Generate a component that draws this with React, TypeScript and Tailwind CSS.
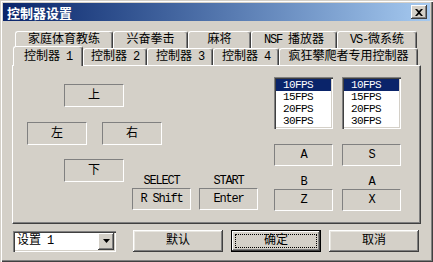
import React from 'react';

const sunken = 'border border-t-[#808080] border-l-[#808080] border-b-white border-r-white flex items-center justify-center';
const latin = "text-[12px] tracking-[-1.2px] font-['Liberation_Mono',monospace]";
const listText = "text-[11px] tracking-[-0.6px] font-['Liberation_Mono',monospace]";

function Tab({ label, w, selected }: { label: React.ReactNode; w: number; selected?: boolean }) {
  return (
    <div
      style={{ width: w }}
      className={`flex items-center justify-center bg-[#d4d0c8] border-t border-l border-r border-t-white border-l-white border-r-[#404040] shadow-[inset_-1px_0_#808080] rounded-t-[3px] ${
        selected ? 'relative z-10 h-[20px] -mt-[2px] -mb-[1px]' : 'h-[17px]'
      }`}
    >
      <span className="whitespace-pre leading-none">{label}</span>
    </div>
  );
}

function KeyBox({ children, w = 59, h = 22 }: { children: React.ReactNode; w?: number; h?: number }) {
  return (
    <div style={{ width: w, height: h }} className={sunken}>
      {children}
    </div>
  );
}

function FpsList() {
  const items = ['10FPS', '15FPS', '20FPS', '30FPS'];
  return (
    <div className="w-[59px] h-[52px] bg-white p-[2px] shadow-[inset_1px_1px_#808080,inset_2px_2px_#404040,inset_-1px_-1px_#fff,inset_-2px_-2px_#d4d0c8]">
      {items.map((it, i) => (
        <div
          key={it}
          className={`h-[12px] flex items-center pl-[7px] ${i === 0 ? 'bg-[#0a246a] text-white' : 'text-black'}`}
        >
          <span className={`${listText} leading-[11px]`}>{it}</span>
        </div>
      ))}
    </div>
  );
}

function Button({ label, isDefault }: { label: string; isDefault?: boolean }) {
  if (isDefault) {
    return (
      <div className="w-[90px] h-[22px] border border-black">
        <div className="w-full h-full bg-[#d4d0c8] p-[3px] shadow-[inset_-1px_-1px_#404040,inset_1px_1px_#fff,inset_-2px_-2px_#808080]">
          <div className="w-full h-full border border-dotted border-black flex items-center justify-center">
            {label}
          </div>
        </div>
      </div>
    );
  }
  return (
    <div className="w-[90px] h-[22px] flex items-center justify-center bg-[#d4d0c8] shadow-[inset_-1px_-1px_#404040,inset_1px_1px_#fff,inset_-2px_-2px_#808080,inset_2px_2px_#e8e6e0]">
      {label}
    </div>
  );
}

export default function App() {
  return (
    <div className="w-[433px] h-[262px] bg-[#d4d0c8] p-[3px] text-[12px] text-black font-['Liberation_Mono','Noto_Sans_CJK_SC',monospace] shadow-[inset_1px_1px_#d4d0c8,inset_2px_2px_#fff,inset_-1px_-1px_#404040,inset_-2px_-2px_#808080]">
      {/* title bar */}
      <div className="h-[18px] flex items-center justify-between bg-linear-to-r from-[#0a246a] to-[#a6caf0] pl-[4px] pr-[3px]">
        <span className="text-white font-bold text-[13px] leading-none font-['Noto_Sans_CJK_SC',sans-serif]">控制器设置</span>
        <div className="w-[16px] h-[14px] bg-[#d4d0c8] flex items-center justify-center shadow-[inset_-1px_-1px_#404040,inset_1px_1px_#fff,inset_-2px_-2px_#808080]">
          <svg width="8" height="7" viewBox="0 0 8 7">
            <path d="M0 0h2l2 2 2-2h2L5 3.5 8 7H6L4 5 2 7H0l3-3.5z" fill="#000" />
          </svg>
        </div>
      </div>

      {/* tabs */}
      <div className="mt-[10px] flex pl-[12px]">
        <Tab label="家庭体育教练" w={98} />
        <Tab label="兴奋拳击" w={75} />
        <Tab label="麻将" w={63} />
        <Tab label={<><span className={latin}>NSF </span>播放器</>} w={86} />
        <Tab label={<><span className={latin}>VS-</span>微系统</>} w={80} />
      </div>
      <div className="flex pl-[10px] items-end">
        <Tab label={<>控制器<span className={latin}> 1</span></>} w={70} selected />
        <Tab label={<>控制器<span className={latin}> 2</span></>} w={64} />
        <Tab label={<>控制器<span className={latin}> 3</span></>} w={66} />
        <Tab label={<>控制器<span className={latin}> 4</span></>} w={66} />
        <Tab label="疯狂攀爬者专用控制器" w={139} />
      </div>

      {/* panel */}
      <div className="ml-[9px] w-[409px] h-[159px] flex pl-[14px] border border-t-white border-l-white border-r-[#404040] border-b-[#404040] shadow-[inset_-1px_-1px_#808080]">
        <div className="w-[247px] flex flex-col">
          <div className="mt-[18px] ml-[37px]">
            <KeyBox w={60} h={23}>上</KeyBox>
          </div>
          <div className="mt-[15px] flex gap-[15px]">
            <KeyBox w={60} h={23}>左</KeyBox>
            <KeyBox w={60} h={23}>右</KeyBox>
          </div>
          <div className="mt-[14px] flex">
            <div className="ml-[37px]">
              <KeyBox w={60} h={23}>下</KeyBox>
            </div>
            <div className="ml-[8px] mt-[16px] flex gap-[8px]">
              <div className="flex flex-col items-center">
                <span className={`${latin} leading-[13px] h-[13px]`}>SELECT</span>
                <KeyBox>
                  <span className={latin}>R Shift</span>
                </KeyBox>
              </div>
              <div className="flex flex-col items-center">
                <span className={`${latin} leading-[13px] h-[13px]`}>START</span>
                <KeyBox>
                  <span className={latin}>Enter</span>
                </KeyBox>
              </div>
            </div>
          </div>
        </div>
        <div className="flex flex-col">
          <div className="mt-[11px] flex gap-[9px]">
            <FpsList />
            <FpsList />
          </div>
          <div className="mt-[15px] flex gap-[9px]">
            <KeyBox><span className={latin}>A</span></KeyBox>
            <KeyBox><span className={latin}>S</span></KeyBox>
          </div>
          <div className="mt-[10px] flex gap-[9px]">
            <div className="w-[59px] flex flex-col items-center">
              <span className={`${latin} leading-[13px] h-[13px]`}>B</span>
              <KeyBox><span className={latin}>Z</span></KeyBox>
            </div>
            <div className="w-[59px] flex flex-col items-center">
              <span className={`${latin} leading-[13px] h-[13px]`}>A</span>
              <KeyBox><span className={latin}>X</span></KeyBox>
            </div>
          </div>
        </div>
      </div>

      {/* bottom row */}
      <div className="mt-[6px] flex items-center pl-[10px]">
        <div className="w-[103px] h-[21px] bg-white flex items-center p-[2px] shadow-[inset_1px_1px_#808080,inset_2px_2px_#404040,inset_-1px_-1px_#fff,inset_-2px_-2px_#d4d0c8]">
          <span className="flex-1 pl-[2px] leading-none">
            设置<span className={latin}> 1</span>
          </span>
          <div className="w-[16px] h-[17px] bg-[#d4d0c8] flex items-center justify-center shadow-[inset_-1px_-1px_#404040,inset_1px_1px_#fff,inset_-2px_-2px_#808080]">
            <svg width="7" height="4" viewBox="0 0 7 4">
              <path d="M0 0h7L3.5 4z" fill="#000" />
            </svg>
          </div>
        </div>
        <div className="ml-[17px] flex gap-[8px]">
          <Button label="默认" />
          <Button label="确定" isDefault />
          <Button label="取消" />
        </div>
      </div>
    </div>
  );
}
